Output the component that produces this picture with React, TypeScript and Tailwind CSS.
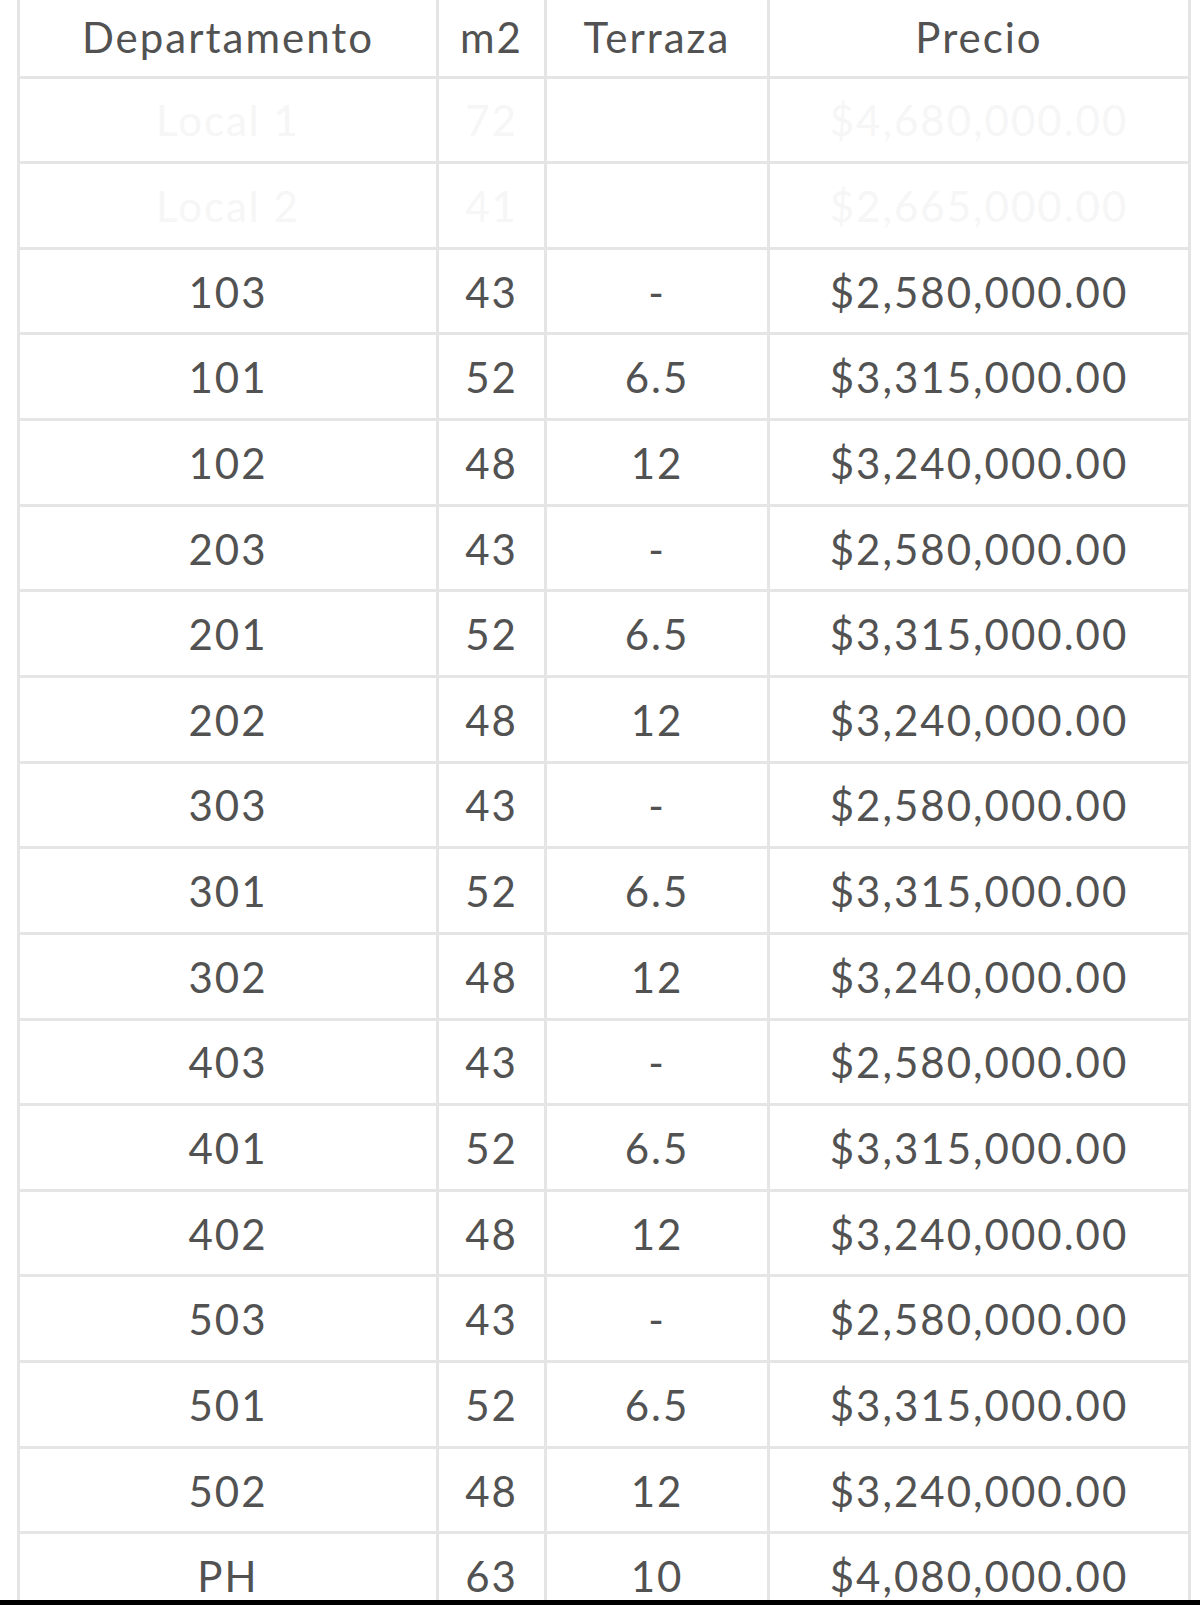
import React from "react";

type Row = { d: string; m: string; t: string; p: string; faded?: boolean };

const rows: Row[] = [
  { d: "Local 1", m: "72", t: "", p: "$4,680,000.00", faded: true },
  { d: "Local 2", m: "41", t: "", p: "$2,665,000.00", faded: true },
  { d: "103", m: "43", t: "-", p: "$2,580,000.00" },
  { d: "101", m: "52", t: "6.5", p: "$3,315,000.00" },
  { d: "102", m: "48", t: "12", p: "$3,240,000.00" },
  { d: "203", m: "43", t: "-", p: "$2,580,000.00" },
  { d: "201", m: "52", t: "6.5", p: "$3,315,000.00" },
  { d: "202", m: "48", t: "12", p: "$3,240,000.00" },
  { d: "303", m: "43", t: "-", p: "$2,580,000.00" },
  { d: "301", m: "52", t: "6.5", p: "$3,315,000.00" },
  { d: "302", m: "48", t: "12", p: "$3,240,000.00" },
  { d: "403", m: "43", t: "-", p: "$2,580,000.00" },
  { d: "401", m: "52", t: "6.5", p: "$3,315,000.00" },
  { d: "402", m: "48", t: "12", p: "$3,240,000.00" },
  { d: "503", m: "43", t: "-", p: "$2,580,000.00" },
  { d: "501", m: "52", t: "6.5", p: "$3,315,000.00" },
  { d: "502", m: "48", t: "12", p: "$3,240,000.00" },
  { d: "PH", m: "63", t: "10", p: "$4,080,000.00" },
];

function Cell({ children, head }: { children: React.ReactNode; head?: boolean }) {
  return (
    <div
      className={
        "flex items-center justify-center border-r-[3px] border-[#e5e5e5] " +
        (head ? "pb-[1px]" : "pt-[2px]")
      }
    >
      {children}
    </div>
  );
}

export default function App() {
  return (
    <div className="w-[1200px] h-[1605px] bg-white flex flex-col overflow-hidden">
      <div
        className="h-[1600px] overflow-hidden text-[42px] tracking-[2px] text-[#525252]"
        style={{ fontFamily: "Lato, 'Liberation Sans', sans-serif" }}
      >
        <div className="ml-[17px] w-[1174px] border-l-[3px] border-[#e5e5e5]">
          <div className="grid grid-cols-[419px_108px_223px_421px] h-[78.5px] border-b-[3px] border-[#e5e5e5]">
            <Cell head>Departamento</Cell>
            <Cell head>m2</Cell>
            <Cell head>Terraza</Cell>
            <Cell head>Precio</Cell>
          </div>
          {rows.map((r, i) => (
            <div
              key={i}
              className={
                "grid grid-cols-[419px_108px_223px_421px] h-[85.65px] border-b-[3px] border-[#e5e5e5] " +
                (r.faded ? "text-[#f6f6f6]" : "")
              }
            >
              <Cell>{r.d}</Cell>
              <Cell>{r.m}</Cell>
              <Cell>{r.t}</Cell>
              <Cell>{r.p}</Cell>
            </div>
          ))}
        </div>
      </div>
      <div className="h-[5px] bg-black shrink-0" />
    </div>
  );
}
